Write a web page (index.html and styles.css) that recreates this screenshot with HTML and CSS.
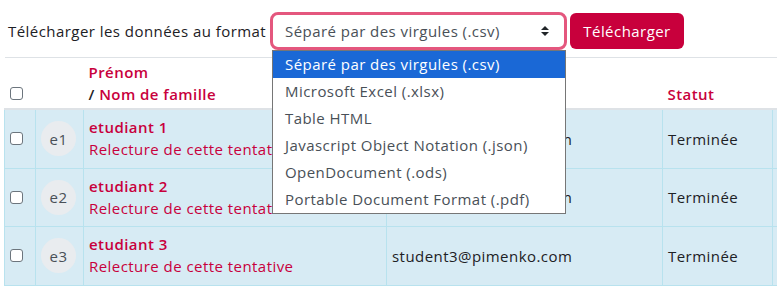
FILE: index.html
```html
<!DOCTYPE html>
<html lang="fr">
<head>
<meta charset="utf-8">
<link rel="stylesheet" href="styles.css">
</head>
<body>
<div class="page">
  <form class="download">
    <label class="download-label">Télécharger les données au format</label>
    <div class="select-wrap">
      <div class="select">
        <span>Séparé par des virgules (.csv)</span>
        <svg class="arrows" width="10" height="12" viewBox="0 0 10 12"><path d="M1 5 L5 1 L9 5 Z M1 7 L5 11 L9 7 Z" fill="#212529"/></svg>
      </div>
      <ul class="menu">
        <li class="active">Séparé par des virgules (.csv)</li>
        <li>Microsoft Excel (.xlsx)</li>
        <li>Table HTML</li>
        <li>Javascript Object Notation (.json)</li>
        <li>OpenDocument (.ods)</li>
        <li>Portable Document Format (.pdf)</li>
      </ul>
    </div>
    <button type="button" class="btn">Télécharger</button>
  </form>
  <table class="grades">
    <thead>
      <tr>
        <th class="c-check"><span class="cb"></span></th>
        <th class="c-av"></th>
        <th class="c-name"><a>Prénom</a><br><span class="slash">/ </span><a>Nom de famille</a></th>
        <th class="c-mail"></th>
        <th class="c-stat"><a>Statut</a></th>
        <th class="c-more"></th>
      </tr>
    </thead>
    <tbody>
      <tr>
        <td class="c-check"><span class="cb"></span></td>
        <td class="c-av"><span class="avatar">e1</span></td>
        <td class="c-name"><a class="who">etudiant 1</a><a class="review">Relecture de cette tentative</a></td>
        <td class="c-mail">student1@pimenko.com</td>
        <td class="c-stat">Terminée</td>
        <td class="c-more"></td>
      </tr>
      <tr>
        <td class="c-check"><span class="cb"></span></td>
        <td class="c-av"><span class="avatar">e2</span></td>
        <td class="c-name"><a class="who">etudiant 2</a><a class="review">Relecture de cette tentative</a></td>
        <td class="c-mail">student2@pimenko.com</td>
        <td class="c-stat">Terminée</td>
        <td class="c-more"></td>
      </tr>
      <tr>
        <td class="c-check"><span class="cb"></span></td>
        <td class="c-av"><span class="avatar">e3</span></td>
        <td class="c-name"><a class="who">etudiant 3</a><a class="review">Relecture de cette tentative</a></td>
        <td class="c-mail">student3@pimenko.com</td>
        <td class="c-stat">Terminée</td>
        <td class="c-more"></td>
      </tr>
    </tbody>
  </table>
</div>
</body>
</html>
```
FILE: styles.css
```css
html, body {
  margin: 0;
  padding: 0;
  background: #fff;
  overflow: hidden;
}
body {
  font-family: "Open Sans", "DejaVu Sans", sans-serif;
  font-size: 15px;
  letter-spacing: 0.45px;
  color: #1d2125;
}
.page {
  padding: 12px 0 0 4px;
  width: 800px;
}
.download {
  display: flex;
  align-items: center;
  height: 38px;
  padding-left: 4px;
  margin-bottom: 7px;
}
.download-label {
  width: 262px;
  white-space: nowrap;
  color: #1d2125;
}
.select-wrap {
  position: relative;
  width: 297px;
  height: 38px;
}
.select {
  box-sizing: border-box;
  height: 38px;
  border: 3px solid #e4577e;
  border-radius: 8px;
  display: flex;
  align-items: center;
  justify-content: space-between;
  padding: 0 14px 0 12px;
  color: #495057;
  background: #fff;
}
.arrows { display: block; }
.menu {
  position: absolute;
  left: 2px;
  top: 38px;
  width: 294px;
  box-sizing: border-box;
  margin: 0;
  padding: 0;
  list-style: none;
  background: #fff;
  border: 1px solid #767676;
  z-index: 5;
}
.menu li {
  height: 27px;
  line-height: 27px;
  padding-left: 12px;
  color: #495057;
  white-space: nowrap;
}
.menu li.active {
  background: #1a68d6;
  color: #fff;
}
.btn {
  margin-left: 3px;
  width: 114px;
  height: 36px;
  border: 0;
  border-radius: 6px;
  background: #c8003c;
  color: #fff;
  font: inherit;
  letter-spacing: 0.45px;
  padding: 0;
}
.grades {
  border-collapse: collapse;
  border-top: 1px solid #dee2e6;
  width: 790px;
}
.grades th {
  text-align: left;
  vertical-align: bottom;
  font-weight: 600;
  height: 47px;
  padding: 0 5px 3px;
  border-bottom: 2px solid #dee2e6;
  line-height: 22px;
}
.grades th a { color: #c8003c; }
.grades .slash { color: #1d2125; }
.grades td {
  background: #d7ebf4;
  border: 1px solid #b8e2ee;
  height: 57.6px;
  padding: 0 5px;
  vertical-align: middle;
}
.c-check { width: 20px; }
.c-av { width: 37px; }
.c-name { width: 292px; }
.c-mail { width: 265px; }
.c-stat { width: 99px; }
.cb {
  display: block;
  width: 11px;
  height: 11px;
  border: 1px solid #6c757d;
  border-radius: 3px;
  background: #fff;
}
.grades th .cb { margin-bottom: 5px; }
.avatar {
  display: flex;
  width: 35px;
  height: 35px;
  border-radius: 50%;
  background: #e9ecef;
  align-items: center;
  justify-content: center;
  color: #495057;
}
.who {
  display: block;
  color: #c8003c;
  font-weight: 600;
  line-height: 22px;
}
.review {
  display: block;
  color: #c8003c;
  line-height: 23px;
}
```
